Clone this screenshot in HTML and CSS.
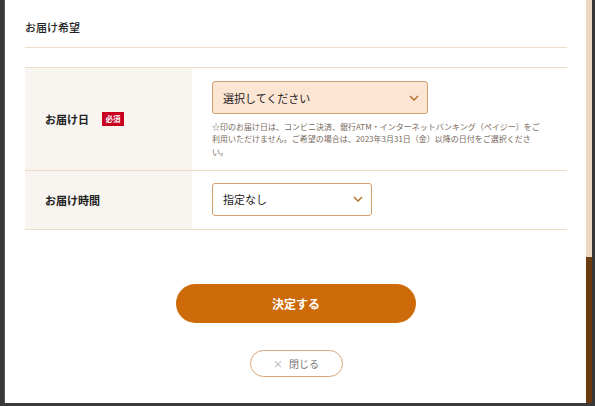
FILE: index.html
```html
<!DOCTYPE html>
<html lang="ja">
<head>
<meta charset="utf-8">
<link rel="stylesheet" href="styles.css">
</head>
<body>
<div class="screen">
  <div class="edge-left"></div>
  <div class="modal">
    <h2 class="title">お届け希望</h2>
    <div class="table">
      <div class="row row-date">
        <div class="label"><span>お届け日</span><span class="badge">必須</span></div>
        <div class="field">
          <div class="select select-hl">
            <span>選択してください</span>
            <svg class="chev" width="10" height="6" viewBox="0 0 10 6"><path d="M1 1l4 4 4-4" fill="none" stroke="#b0651c" stroke-width="1.3"/></svg>
          </div>
          <p class="note">☆印のお届け日は、コンビニ決済、銀行ATM・インターネットバンキング（ペイジー）をご利用いただけません。ご希望の場合は、2023年3月31日（金）以降の日付をご選択ください。</p>
        </div>
      </div>
      <div class="row row-time">
        <div class="label"><span>お届け時間</span></div>
        <div class="field">
          <div class="select select-sm">
            <span>指定なし</span>
            <svg class="chev" width="10" height="6" viewBox="0 0 10 6"><path d="M1 1l4 4 4-4" fill="none" stroke="#b0651c" stroke-width="1.3"/></svg>
          </div>
        </div>
      </div>
    </div>
    <div class="actions">
      <button class="btn-primary">決定する</button>
      <button class="btn-close"><span class="x">×</span>閉じる</button>
    </div>
  </div>
  <div class="track"><div class="thumb"></div></div>
  <div class="edge-right"></div>
</div>
<div class="edge-bottom"></div>
</body>
</html>
```

FILE: styles.css
```css
html, body {
  margin: 0;
  padding: 0;
}
body {
  width: 595px;
  height: 406px;
  overflow: hidden;
  background: #353535;
  font-family: "Noto Sans CJK JP", "Noto Sans", sans-serif;
  color: #222;
  display: flex;
  flex-direction: column;
}
.screen {
  display: flex;
  height: 403px;
}
.edge-left {
  width: 4px;
  background: #383838;
  border-right: 1px solid #5a5a5a;
}
.modal {
  width: 581px;
  background: #fff;
  box-sizing: border-box;
  padding: 19px 19px 0 20px;
}
.title {
  margin: 0;
  font-size: 11px;
  line-height: 16px;
  font-weight: 500;
  padding-bottom: 12px;
  border-bottom: 1px solid #ecdccb;
}
.table {
  margin-top: 19px;
  border-top: 1px solid #ecdccb;
}
.row {
  display: flex;
  border-bottom: 1px solid #f0dbc5;
}
.label {
  width: 167px;
  flex: none;
  background: #f8f4f0;
  box-sizing: border-box;
  padding-left: 20px;
  display: flex;
  align-items: center;
  font-size: 11px;
  font-weight: bold;
}
.badge {
  margin-left: 13px;
  width: 22px;
  height: 14px;
  background: #c9001f;
  color: #fff;
  font-size: 7.5px;
  font-weight: bold;
  display: flex;
  align-items: center;
  justify-content: center;
}
.field {
  padding: 13px 20px 12px 20px;
  flex: 1;
}
.row-time .field {
  padding: 12px 20px 13px 20px;
}
.select {
  box-sizing: border-box;
  height: 33px;
  border: 1px solid #d3a070;
  border-radius: 3px;
  display: flex;
  align-items: center;
  justify-content: space-between;
  padding: 0 8px 0 10px;
  font-size: 11px;
  color: #222;
}
.select-hl {
  width: 216px;
  background: #fde5d3;
}
.select-sm {
  width: 160px;
  background: #fff;
}
.chev {
  display: block;
}
.note {
  margin: 7px 0 0;
  width: 332px;
  font-size: 8px;
  line-height: 12.3px;
  color: #77695d;
}
.actions {
  display: flex;
  flex-direction: column;
  align-items: center;
  padding-top: 54px;
}
.btn-primary {
  width: 240px;
  height: 39px;
  border: none;
  border-radius: 20px;
  background: #cd6b0a;
  color: #fff;
  font-family: inherit;
  font-size: 12px;
  font-weight: bold;
  padding: 0;
}
.btn-close {
  margin-top: 27px;
  width: 93px;
  height: 27px;
  border: 1px solid #d9a67b;
  border-radius: 14px;
  background: #fff;
  color: #777;
  font-family: inherit;
  font-size: 10px;
  padding: 0;
}
.btn-close .x {
  color: #aaa;
  margin-right: 6px;
}
.track {
  width: 6px;
  background: #ecd7c3;
  display: flex;
  flex-direction: column;
  justify-content: flex-end;
}
.thumb {
  height: 146px;
  background: #6b3a11;
}
.edge-right {
  flex: 1;
  background: #363636;
}
.edge-bottom {
  flex: 1;
  background: #3a3a3a;
}
```
